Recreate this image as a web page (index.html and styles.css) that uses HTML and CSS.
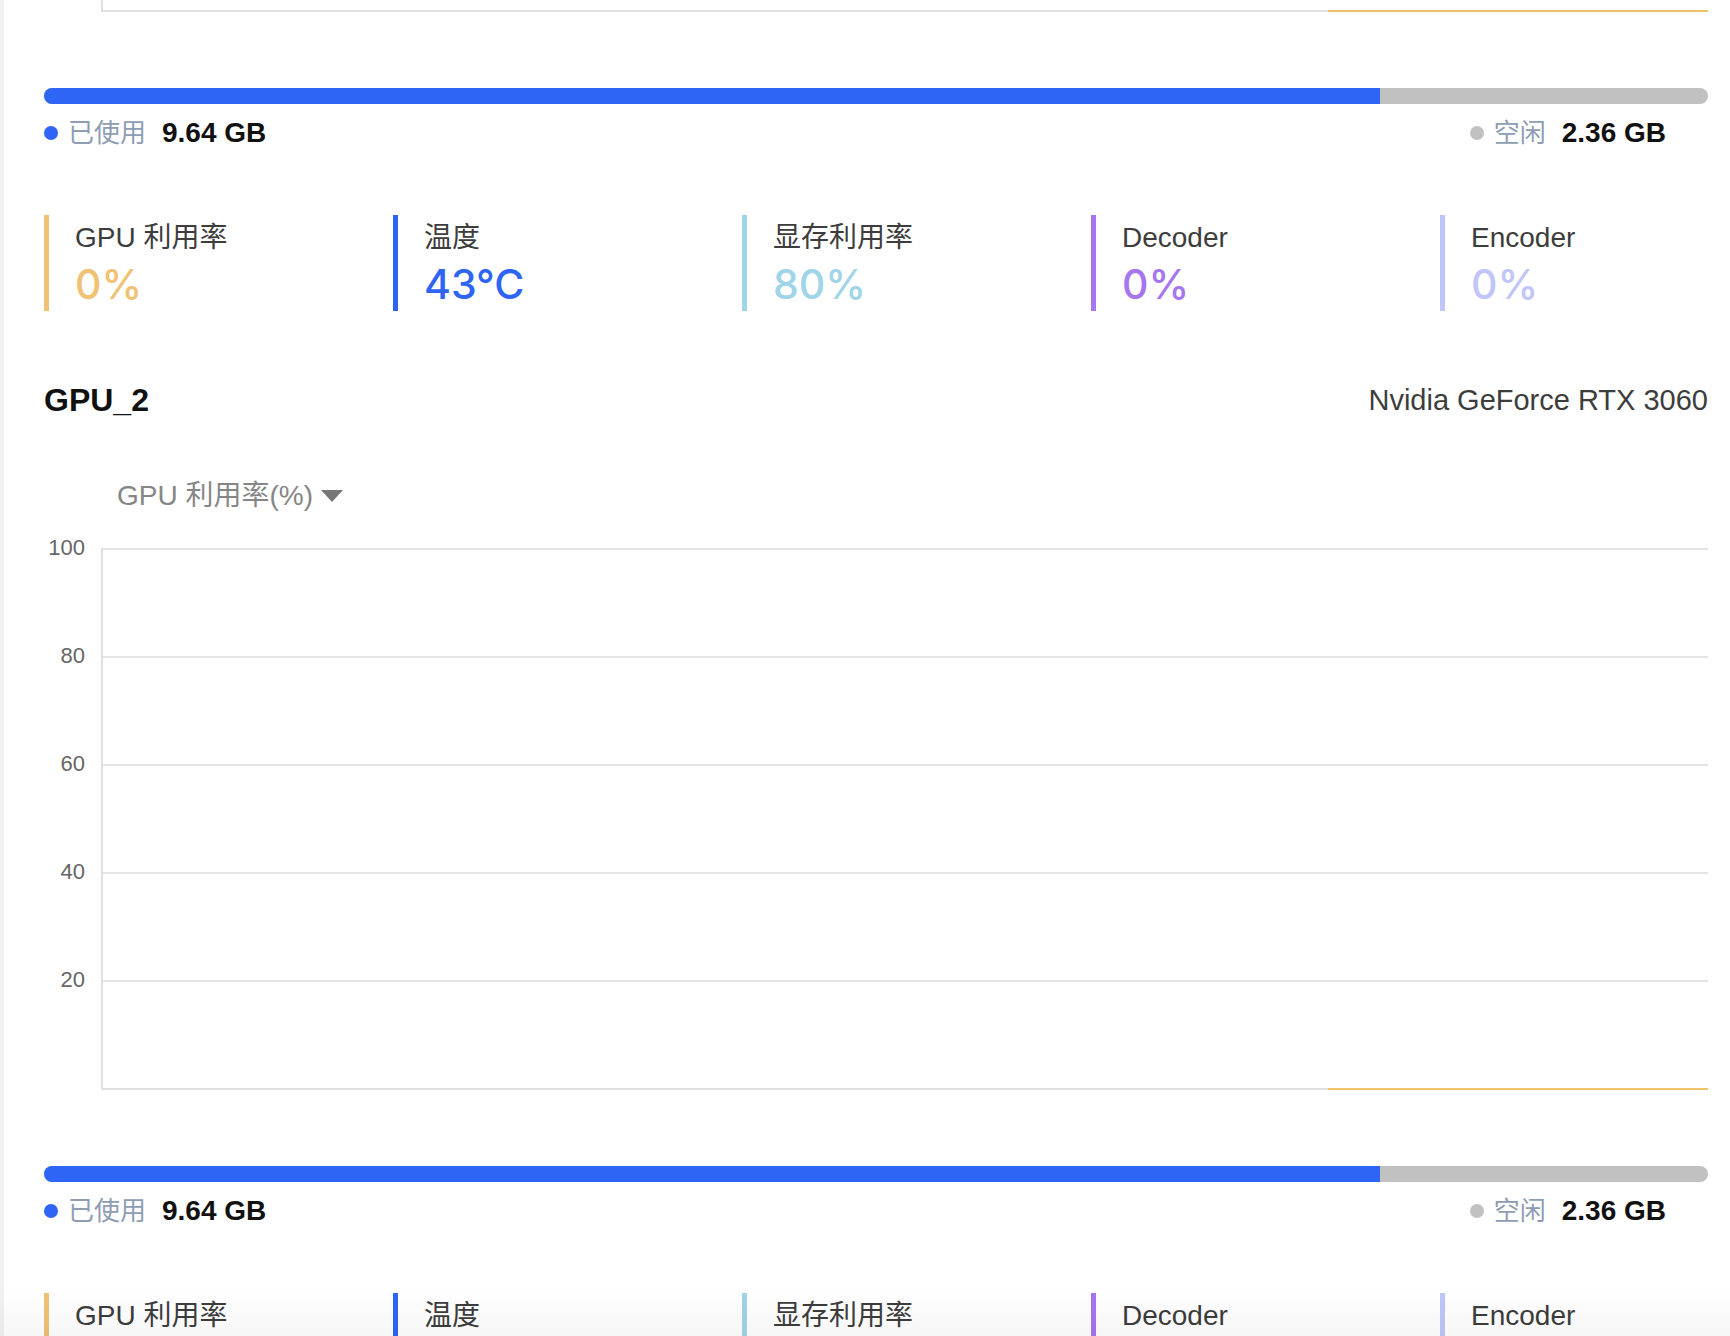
FILE: index.html
```html
<!DOCTYPE html>
<html lang="zh">
<head>
    <meta charset="UTF-8">
    <meta name="viewport" content="width=device-width, initial-scale=1.0">
    <title>GPU 监控</title>
    <link rel="stylesheet" href="styles.css">
</head>
<body>
    <div class="main">
        <!-- 页面已滚动到 GPU_2 -->
        <div class="gpu-list">
            <div class="gpu-block">
                <div class="gpu-head">
                    <div class="gpu-name">GPU_1</div>
                    <div class="gpu-model">Nvidia GeForce RTX 3060</div>
                </div>
                <div class="chart-title">GPU 利用率(%)<span class="caret"></span></div>
                <div class="chart-body">
                    <div class="y-axis">
                        <div>100</div>
                        <div>80</div>
                        <div>60</div>
                        <div>40</div>
                        <div>20</div>
                    </div>
                    <div class="plot">
                        <div class="grid-row"></div>
                        <div class="grid-row"></div>
                        <div class="grid-row"></div>
                        <div class="grid-row"></div>
                        <div class="grid-row"></div>
                        <div class="data-line" style="width: 23.7%"></div>
                    </div>
                </div>
                <div class="mem-bar">
                    <div class="mem-used" style="width: 80.3%"></div>
                </div>
                <div class="mem-legend">
                    <div class="legend-item">
                        <span class="dot used"></span>
                        <span class="legend-label">已使用</span>
                        <span class="legend-value">9.64 GB</span>
                    </div>
                    <div class="legend-item">
                        <span class="dot free"></span>
                        <span class="legend-label">空闲</span>
                        <span class="legend-value">2.36 GB</span>
                    </div>
                </div>
                <div class="stats">
                    <div class="stat util">
                        <div class="stat-label">GPU 利用率</div>
                        <div class="stat-value">0%</div>
                    </div>
                    <div class="stat temp">
                        <div class="stat-label">温度</div>
                        <div class="stat-value">43°C</div>
                    </div>
                    <div class="stat mem">
                        <div class="stat-label">显存利用率</div>
                        <div class="stat-value">80%</div>
                    </div>
                    <div class="stat dec">
                        <div class="stat-label">Decoder</div>
                        <div class="stat-value">0%</div>
                    </div>
                    <div class="stat enc">
                        <div class="stat-label">Encoder</div>
                        <div class="stat-value">0%</div>
                    </div>
                </div>
            </div>

            <div class="gpu-block">
                <div class="gpu-head">
                    <div class="gpu-name">GPU_2</div>
                    <div class="gpu-model">Nvidia GeForce RTX 3060</div>
                </div>
                <div class="chart-title">GPU 利用率(%)<span class="caret"></span></div>
                <div class="chart-body">
                    <div class="y-axis">
                        <div>100</div>
                        <div>80</div>
                        <div>60</div>
                        <div>40</div>
                        <div>20</div>
                    </div>
                    <div class="plot">
                        <div class="grid-row"></div>
                        <div class="grid-row"></div>
                        <div class="grid-row"></div>
                        <div class="grid-row"></div>
                        <div class="grid-row"></div>
                        <div class="data-line" style="width: 23.7%"></div>
                    </div>
                </div>
                <div class="mem-bar">
                    <div class="mem-used" style="width: 80.3%"></div>
                </div>
                <div class="mem-legend">
                    <div class="legend-item">
                        <span class="dot used"></span>
                        <span class="legend-label">已使用</span>
                        <span class="legend-value">9.64 GB</span>
                    </div>
                    <div class="legend-item">
                        <span class="dot free"></span>
                        <span class="legend-label">空闲</span>
                        <span class="legend-value">2.36 GB</span>
                    </div>
                </div>
                <div class="stats">
                    <div class="stat util">
                        <div class="stat-label">GPU 利用率</div>
                        <div class="stat-value">0%</div>
                    </div>
                    <div class="stat temp">
                        <div class="stat-label">温度</div>
                        <div class="stat-value">43°C</div>
                    </div>
                    <div class="stat mem">
                        <div class="stat-label">显存利用率</div>
                        <div class="stat-value">80%</div>
                    </div>
                    <div class="stat dec">
                        <div class="stat-label">Decoder</div>
                        <div class="stat-value">0%</div>
                    </div>
                    <div class="stat enc">
                        <div class="stat-label">Encoder</div>
                        <div class="stat-value">0%</div>
                    </div>
                </div>
            </div>
        </div>
    </div>
    <div class="page-fade"></div>
</body>
</html>
```

FILE: styles.css
```css
html, body {
    margin: 0;
    height: 100%;
    overflow: hidden;
}
body {
    font-family: 'Liberation Sans', 'Noto Sans CJK SC', sans-serif;
    background-color: #f1f1f1;
    color: #3d3d3d;
}
.main {
    margin-left: 4px;
    min-height: 100%;
    background: white;
    padding: 0 22px 0 40px;
}

/* 滚动位置：GPU_1 只露出底部 */
.gpu-list {
    margin-top: -698px;
}
.gpu-block + .gpu-block {
    margin-top: 69px;
}

.gpu-head {
    display: flex;
    justify-content: space-between;
    align-items: center;
    height: 40px;
}
.gpu-name {
    font-size: 32px;
    font-weight: bold;
    color: #111;
}
.gpu-model {
    font-size: 29px;
    color: #3d3d3d;
}

.chart-title {
    margin-top: 58px;
    padding-left: 73px;
    font-size: 28px;
    line-height: 36px;
    color: #868686;
    display: flex;
    align-items: center;
}
.caret {
    margin-left: 8px;
    width: 0;
    height: 0;
    border-left: 11px solid transparent;
    border-right: 11px solid transparent;
    border-top: 12px solid #777;
}

.chart-body {
    margin-top: 34px;
    display: grid;
    grid-template-columns: 41px 1fr;
    gap: 16px;
}
.y-axis {
    margin-top: -11px;
    text-align: right;
    font-size: 22px;
    line-height: 22px;
    color: #666;
}
.y-axis div {
    height: 108px;
}
.plot {
    position: relative;
    height: 540px;
    border-left: 2px solid #e0e0e0;
    border-bottom: 2px solid #e0e0e0;
    display: grid;
    grid-template-rows: repeat(5, 1fr);
}
.grid-row {
    border-top: 2px solid #e4e4e4;
}
.data-line {
    position: absolute;
    right: 0;
    bottom: -2px;
    height: 2px;
    background: #f0c06a;
}

.mem-bar {
    margin-top: 76px;
    height: 16px;
    border-radius: 8px;
    background: #c1c1c1;
    overflow: hidden;
}
.mem-used {
    height: 100%;
    background: #2e65f4;
}
.mem-legend {
    margin-top: 11px;
    display: flex;
    justify-content: space-between;
    padding-right: 42px;
    line-height: 36px;
}
.legend-item {
    display: flex;
    align-items: center;
}
.dot {
    width: 14px;
    height: 14px;
    border-radius: 50%;
    margin-right: 10px;
}
.dot.used {
    background: #2e65f4;
}
.dot.free {
    background: #c1c1c1;
}
.legend-label {
    font-size: 26px;
    color: #8e9cb4;
}
.legend-value {
    margin-left: 16px;
    font-size: 28px;
    font-weight: bold;
    color: #111;
}

.stats {
    margin-top: 64px;
    display: grid;
    grid-template-columns: repeat(5, 1fr);
    gap: 81px;
}
.stat {
    height: 96px;
    box-sizing: border-box;
    padding: 3px 0 0 26px;
    border-left: 5px solid;
}
.stat-label {
    font-size: 28px;
    line-height: 40px;
    color: #3d3d3d;
}
.stat-value {
    font-family: Inter, 'Liberation Sans', sans-serif;
    font-weight: 500;
    font-size: 41px;
    line-height: 52px;
}
.stat.util { border-color: #f0c274; color: #f0c274; }
.stat.temp { border-color: #2e65f4; color: #2e65f4; }
.stat.mem { border-color: #a0d4e8; color: #a0d4e8; }
.stat.dec { border-color: #a675f0; color: #a675f0; }
.stat.enc { border-color: #c0c7f8; color: #c0c7f8; }

.page-fade {
    position: fixed;
    left: 0;
    right: 0;
    bottom: 0;
    height: 46px;
    background: linear-gradient(rgba(0,0,0,0), rgba(0,0,0,0.035));
    pointer-events: none;
}
```
